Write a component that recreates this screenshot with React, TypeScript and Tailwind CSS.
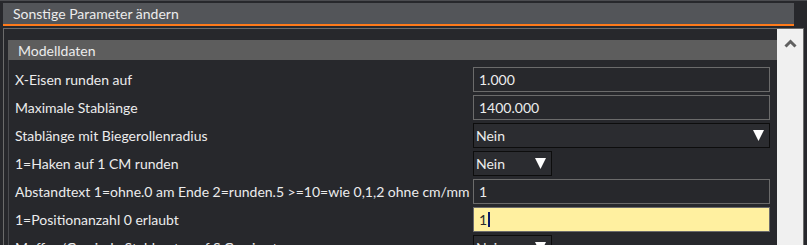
import React from 'react';

type Row =
  | { label: string; kind: 'input'; value: string; active?: boolean }
  | { label: string; kind: 'select'; value: string; wide?: boolean };

const rows: Row[] = [
  { label: 'X-Eisen runden auf', kind: 'input', value: '1.000' },
  { label: 'Maximale Stablänge', kind: 'input', value: '1400.000' },
  { label: 'Stablänge mit Biegerollenradius', kind: 'select', value: 'Nein', wide: true },
  { label: '1=Haken auf 1 CM runden', kind: 'select', value: 'Nein' },
  { label: 'Abstandtext 1=ohne.0 am Ende 2=runden.5 >=10=wie 0,1,2 ohne cm/mm', kind: 'input', value: '1' },
  { label: '1=Positionanzahl 0 erlaubt', kind: 'input', value: '1', active: true },
  { label: 'Muffen/Gewinde Stablsorte auf S.Gewi setzen', kind: 'select', value: 'Nein' },
];

const Triangle = () => (
  <svg width="11" height="11" viewBox="0 0 11 11" className="shrink-0">
    <polygon points="0,0 11,0 5.5,11" fill="#ffffff" />
  </svg>
);

const Field: React.FC<{ row: Row }> = ({ row }) => {
  if (row.kind === 'select') {
    return (
      <div
        className={
          'h-[25px] shrink-0 flex items-center justify-between bg-[#2b2c30] border border-[#0d0d0d] pl-[2px] pr-[5px] ' +
          (row.wide ? 'w-[297px]' : 'w-[79px]')
        }
      >
        <span className="text-[14px] text-[#ececec]">{row.value}</span>
        <Triangle />
      </div>
    );
  }
  if (row.active) {
    return (
      <div className="h-[25px] w-[297px] shrink-0 flex items-center bg-[#fff0a0] border border-[#6b6b6b] pl-[5px]">
        <span className="text-[14px] text-[#2a2a2a]">{row.value}</span>
        <span className="w-[2px] h-[15px] bg-[#0b1a66] ml-[1px]" />
      </div>
    );
  }
  return (
    <div className="h-[25px] w-[297px] shrink-0 flex items-center bg-[#27282c] border border-[#6b6b6b] pl-[5px]">
      <span className="text-[14px] text-[#ececec]">{row.value}</span>
    </div>
  );
};

export default function App() {
  return (
    <div
      className="w-[807px] h-[245px] overflow-hidden bg-[#27282c] border-t border-[#4b4c50] flex flex-col"
      style={{ fontFamily: 'Lato, "Open Sans", sans-serif' }}
    >
      <div className="mt-[2px] ml-[3px] w-[791px] h-[23px] shrink-0 bg-[#535559] border-b-2 border-[#ff7a1a] flex items-center pl-[10px]">
        <span className="text-[14px] text-[#ececec]">Sonstige Parameter ändern</span>
      </div>

      <div className="mt-[2px] ml-[3px] w-[801px] flex-1 border-t border-l border-r border-[#6b6b6b] flex">
        <div className="flex-1 pt-[11px] pl-[4px] flex flex-col">
          <div className="h-[20px] bg-[#5d5d5d] flex items-center pl-[10px]">
            <span className="text-[14px] text-[#ececec]">Modelldaten</span>
          </div>
          <div className="flex-1 border-l border-[#4a4b4f] pt-[7px] flex flex-col gap-[3px]">
            {rows.map((row) => (
              <div key={row.label} className="h-[25px] shrink-0 flex items-center">
                <div className="w-[464px] shrink-0 pl-[6px] text-[14px] text-[#ececec] whitespace-nowrap">
                  {row.label}
                </div>
                <Field row={row} />
              </div>
            ))}
          </div>
        </div>
        <div className="w-[26px] bg-[#f0f0f0] flex justify-center pt-[10px]">
          <svg width="13" height="9" viewBox="0 0 13 9">
            <polyline points="1.5,7.5 6.5,2.5 11.5,7.5" fill="none" stroke="#606060" strokeWidth="3" />
          </svg>
        </div>
      </div>
    </div>
  );
}
